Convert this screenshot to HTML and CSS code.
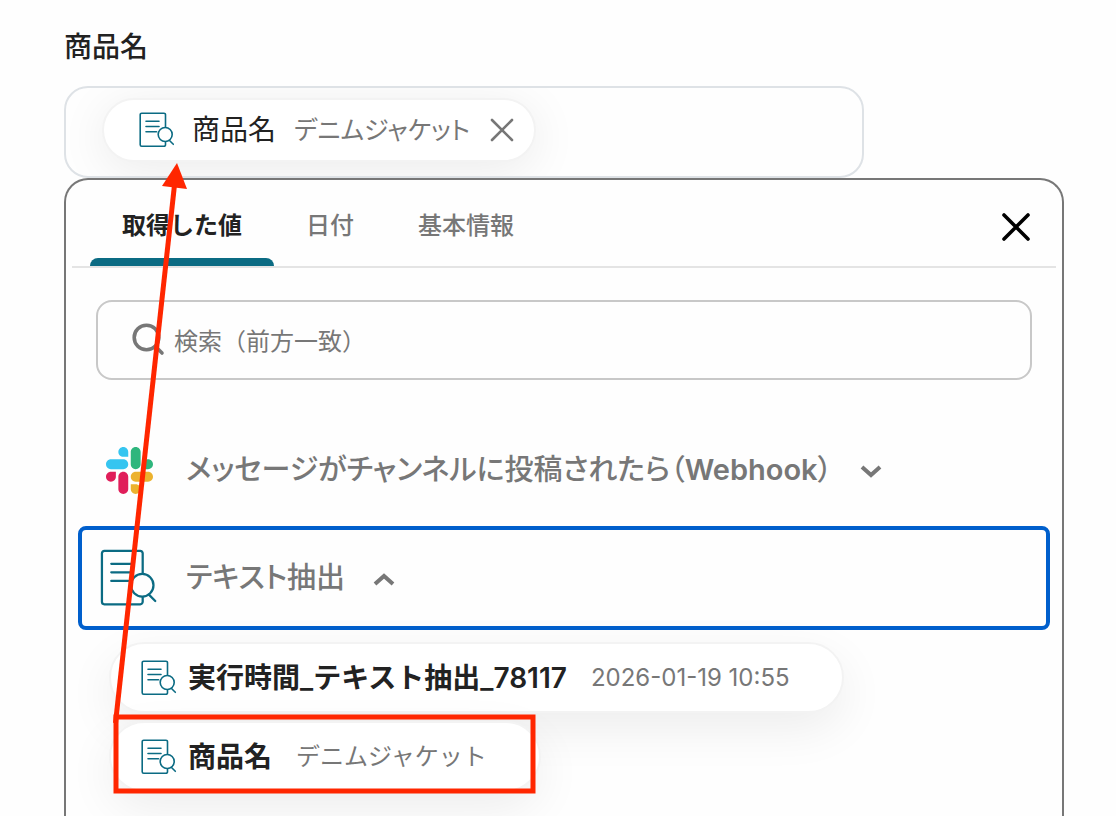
FILE: index.html
```html
<!DOCTYPE html>
<html lang="ja">

<head>
    <meta charset="UTF-8" />
    <meta name="viewport" content="width=device-width, initial-scale=1.0" />
    <title>商品名</title>
    <link rel="stylesheet" href="styles.css">
</head>

<body>
    <!-- 共通アイコン -->
    <svg class="sprite" width="0" height="0" aria-hidden="true">
        <symbol id="icon-extract" viewBox="0 0 36 36">
            <g fill="none" stroke="currentColor" stroke-linecap="round" stroke-linejoin="round">
                <path d="M26.5 15V2.7a1.5 1.5 0 0 0-1.5-1.5H2.7A1.5 1.5 0 0 0 1.2 2.7v30.1a1.5 1.5 0 0 0 1.5 1.5H25a1.5 1.5 0 0 0 1.5-1.5V30" />
                <path d="M7 9.2h13M7 14.5h13M7 19.8h10.5" />
                <circle cx="26.2" cy="22.5" r="7" />
                <path d="M30.5 28.5l3.8 3.8" />
            </g>
        </symbol>
    </svg>

    <main class="page">
        <label class="field-label" for="item-name">商品名</label>
        <div class="field">
            <div class="token">
                <svg class="icon-small" aria-hidden="true"><use href="#icon-extract" /></svg>
                <span class="token-name">商品名</span>
                <span class="token-value">デニムジャケット</span>
                <button class="token-remove" type="button" aria-label="削除">
                    <svg width="24" height="24" viewBox="0 0 24 24" aria-hidden="true">
                        <path d="M2 2l20 20M22 2L2 22" fill="none" stroke="currentColor" stroke-width="2.6" stroke-linecap="round" />
                    </svg>
                </button>
            </div>
            <input class="field-input" type="text" id="item-name" />
        </div>

        <!-- 値の選択パネル -->
        <section class="panel">
            <header class="panel-header">
                <div class="tabs" role="tablist">
                    <button class="tab active" type="button" role="tab" aria-selected="true">取得した値</button>
                    <button class="tab" type="button" role="tab" aria-selected="false">日付</button>
                    <button class="tab" type="button" role="tab" aria-selected="false">基本情報</button>
                </div>
                <button class="panel-close" type="button" aria-label="閉じる">
                    <svg width="30" height="30" viewBox="0 0 30 30" aria-hidden="true">
                        <path d="M3 3l24 24M27 3L3 27" fill="none" stroke="currentColor" stroke-width="3.6" stroke-linecap="round" />
                    </svg>
                </button>
            </header>

            <div class="search">
                <svg class="search-icon" width="34" height="34" viewBox="0 0 34 34" aria-hidden="true">
                    <circle cx="14.5" cy="14.5" r="12.3" fill="none" stroke="currentColor" stroke-width="3.6" />
                    <path d="M23.5 23.5l6.5 6.5" stroke="currentColor" stroke-width="3.6" stroke-linecap="round" />
                </svg>
                <input class="search-input" type="text" placeholder="検索（前方一致）" aria-label="検索（前方一致）" />
            </div>

            <div class="groups">
                <button class="group" type="button" aria-expanded="false">
                    <span class="group-icon">
                        <svg width="47" height="47" viewBox="0 0 122.8 122.8" aria-hidden="true">
                            <path fill="#e01e5a" d="M25.8 77.6c0 7.1-5.8 12.9-12.9 12.9S0 84.7 0 77.6s5.8-12.9 12.9-12.9h12.9v12.9zm6.5 0c0-7.1 5.8-12.9 12.9-12.9s12.9 5.8 12.9 12.9v32.3c0 7.1-5.8 12.9-12.9 12.9s-12.9-5.8-12.9-12.9V77.6z" />
                            <path fill="#36c5f0" d="M45.2 25.8c-7.1 0-12.9-5.8-12.9-12.9S38.1 0 45.2 0s12.9 5.8 12.9 12.9v12.9H45.2zm0 6.5c7.1 0 12.9 5.8 12.9 12.9s-5.8 12.9-12.9 12.9H12.9C5.8 58.1 0 52.3 0 45.2s5.8-12.9 12.9-12.9h32.3z" />
                            <path fill="#2eb67d" d="M97 45.2c0-7.1 5.8-12.9 12.9-12.9s12.9 5.8 12.9 12.9-5.8 12.9-12.9 12.9H97V45.2zm-6.5 0c0 7.1-5.8 12.9-12.9 12.9s-12.9-5.8-12.9-12.9V12.9C64.7 5.8 70.5 0 77.6 0s12.9 5.8 12.9 12.9v32.3z" />
                            <path fill="#ecb22e" d="M77.6 97c7.1 0 12.9 5.8 12.9 12.9s-5.8 12.9-12.9 12.9-12.9-5.8-12.9-12.9V97h12.9zm0-6.5c-7.1 0-12.9-5.8-12.9-12.9s5.8-12.9 12.9-12.9h32.3c7.1 0 12.9 5.8 12.9 12.9s-5.8 12.9-12.9 12.9H77.6z" />
                        </svg>
                    </span>
                    <span>メッセージがチャンネルに投稿されたら（<span class="latin">Webhook</span>）</span>
                    <svg class="chevron" width="24" height="24" viewBox="0 0 24 24" aria-hidden="true">
                        <path d="M3 9l9 8 9-8" />
                    </svg>
                </button>

                <button class="group focused" type="button" aria-expanded="true">
                    <span class="group-icon">
                        <svg class="icon-large" aria-hidden="true"><use href="#icon-extract" /></svg>
                    </span>
                    <span>テキスト抽出</span>
                    <svg class="chevron" width="24" height="24" viewBox="0 0 24 24" aria-hidden="true">
                        <path d="M3 18l9-8 9 8" />
                    </svg>
                </button>
            </div>

            <div class="values">
                <button class="value" type="button">
                    <svg class="icon-small" aria-hidden="true"><use href="#icon-extract" /></svg>
                    <span class="value-name">実行時間_テキスト抽出_78117</span>
                    <span class="value-text">2026-01-19 10:55</span>
                </button>
                <button class="value" type="button">
                    <svg class="icon-small" aria-hidden="true"><use href="#icon-extract" /></svg>
                    <span class="value-name">商品名</span>
                    <span class="value-text">デニムジャケット</span>
                </button>
            </div>
        </section>
    </main>

    <!-- 説明用の赤枠と矢印 -->
    <svg class="annotation" width="560" height="816" viewBox="0 0 560 816" aria-hidden="true">
        <rect x="116" y="717" width="417" height="74" fill="none" stroke="#ff2600" stroke-width="5" />
        <path d="M115.5 723L174.5 185" stroke="#ff2600" stroke-width="5" />
        <path d="M177 163l10 26-25-3z" fill="#ff2600" />
    </svg>
</body>
</html>
```

FILE: styles.css
```css
* {
    box-sizing: border-box;
}

body {
    margin: 0;
    background: #fefefe;
    color: #222;
    font-family: Inter, "Noto Sans CJK JP", sans-serif;
    font-size: 24px;
    line-height: 32px;
}

button,
input {
    margin: 0;
    padding: 0;
    border: none;
    background: none;
    color: inherit;
    font: inherit;
}

button {
    cursor: pointer;
}

svg {
    display: block;
    flex-shrink: 0;
}

.sprite {
    position: absolute;
}

/* 英数字は少し太く */
.latin {
    font-weight: 600;
}

/* ページ全体 */
.page {
    display: flex;
    flex-direction: column;
    min-height: 100vh;
    padding: 31px 52px 0 64px;
}

.field-label {
    align-self: flex-start;
    margin-bottom: 23px;
    font-size: 28px;
    font-weight: 500;
}

/* 入力欄 */
.field {
    display: flex;
    align-items: center;
    width: 80%;
    height: 92px;
    padding: 0 36px 4px;
    border: 2px solid #dee2e6;
    border-radius: 24px;
    overflow: hidden;
}

.field-input {
    flex: 1;
    min-width: 0;
    height: 60px;
    outline: none;
}

.token {
    display: flex;
    align-items: center;
    height: 64px;
    padding: 0 20px 0 35px;
    border: 2px solid #f3f3f3;
    border-radius: 32px;
    background: #fff;
    box-shadow: 0 8px 48px rgba(0, 0, 0, 0.08);
    white-space: nowrap;
}

.icon-small {
    width: 36px;
    height: 36px;
    color: #0b6b83;
    stroke-width: 1.6;
}

.icon-large {
    width: 58px;
    height: 58px;
    color: #0b6b83;
    stroke-width: 1.4;
}

.token-name {
    margin-left: 17px;
    font-size: 28px;
}

.token-value {
    margin: 0 20px 0 18px;
    color: #777;
    font-size: 25px;
    font-feature-settings: "palt";
}

.token-remove {
    color: #777;
}

/* パネル */
.panel {
    flex: 1;
    border: 2px solid #777;
    border-bottom: none;
    border-radius: 24px 24px 0 0;
    background: #fefefe;
}

.panel-header {
    display: flex;
    align-items: center;
    justify-content: space-between;
    height: 88px;
    margin: 0 6px;
    padding: 0 25px 0 18px;
    border-bottom: 2px solid #e4e4e4;
}

.tabs {
    display: flex;
    align-self: stretch;
}

.tab {
    position: relative;
    padding: 6px 32px 0;
    color: #777;
    font-weight: 500;
}

.tab.active {
    color: #222;
    font-weight: 600;
}

.tab.active::after {
    content: "";
    position: absolute;
    right: 0;
    bottom: 0;
    left: 0;
    height: 8px;
    border-radius: 8px 8px 0 0;
    background: #0b6b83;
}

.panel-close {
    margin-top: 8px;
    color: #000;
}

/* 検索 */
.search {
    display: flex;
    align-items: center;
    gap: 8px;
    height: 80px;
    margin: 32px 30px 38px;
    padding: 0 34px;
    border: 2px solid #c8c8c8;
    border-radius: 16px;
}

.search-icon {
    color: #777;
}

.search-input {
    flex: 1;
    min-width: 0;
    padding-top: 4px;
    outline: none;
}

.search-input::placeholder {
    color: #777;
    opacity: 1;
}

/* グループ */
.groups {
    display: flex;
    flex-direction: column;
    gap: 4px;
    margin: 0 12px;
}

.group {
    display: flex;
    align-items: center;
    height: 104px;
    padding: 0 18px;
    border: 4px solid transparent;
    border-radius: 8px;
    color: #777;
    font-size: 29px;
    font-weight: 500;
    font-feature-settings: "palt";
    text-align: left;
}

.group.focused {
    border-color: #005fcc;
}

.group-icon {
    display: flex;
    justify-content: center;
    width: 58px;
    margin-right: 28px;
}

.chevron {
    margin-left: 27px;
    fill: none;
    stroke: currentColor;
    stroke-width: 4;
}

/* 値の一覧 */
.values {
    display: flex;
    flex-direction: column;
    align-items: flex-start;
    gap: 8px;
    padding: 12px 43px 24px;
}

.value {
    display: flex;
    align-items: center;
    height: 71px;
    padding: 0 52px 0 30px;
    border: 2px solid #f3f3f3;
    border-radius: 36px;
    background: #fff;
    box-shadow: 0 16px 48px rgba(0, 0, 0, 0.07);
    white-space: nowrap;
}

.value-name {
    margin: 0 24px 0 11px;
    font-size: 28px;
    font-weight: 600;
}

.value-text {
    color: #777;
}

/* 赤枠と矢印 */
.annotation {
    position: absolute;
    top: 0;
    left: 0;
    pointer-events: none;
}
```
